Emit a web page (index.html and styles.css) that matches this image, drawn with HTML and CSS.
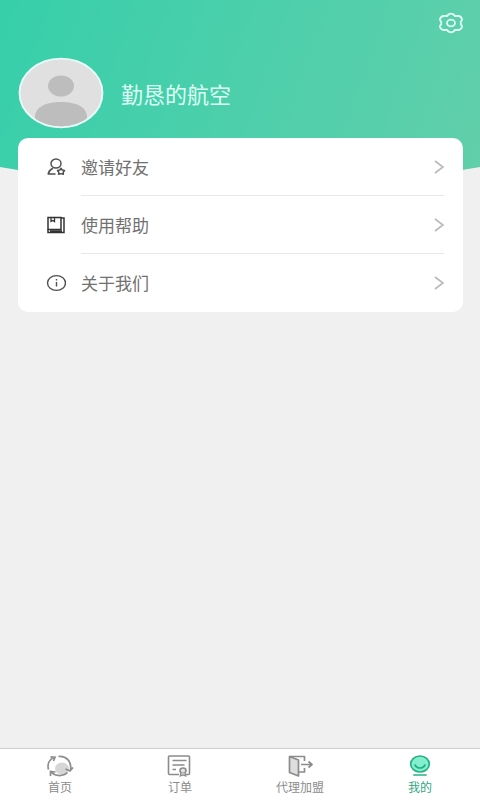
FILE: index.html
```html
<!DOCTYPE html>
<html lang="zh-CN">
<head>
<meta charset="utf-8">
<meta name="viewport" content="width=device-width, initial-scale=1">
<title>我的</title>
<link rel="stylesheet" href="styles.css">
</head>
<body>
<main class="page">
  <header class="profile">
    <button class="settings" type="button" aria-label="设置">
      <svg width="26" height="22" viewBox="0 0 26 22" fill="none" stroke="#dffff5" stroke-width="1.800" stroke-linejoin="round">
        <path d="M10.500 2.500Q13 .6 15.500 2.500L17 4H20.500Q23 4.200 24 7Q24.300 8.500 22.800 9.500V12.500Q24.300 13.500 24 15Q23 17.800 20.500 18H17L15.500 19.500Q13 21.400 10.500 19.500L9 18H5.500Q3 17.800 2 15Q1.700 13.500 3.200 12.500V9.500Q1.700 8.500 2 7Q3 4.200 5.500 4H9Z"/>
        <ellipse cx="13" cy="11" rx="4" ry="3.300"/>
      </svg>
    </button>
    <div class="user">
      <svg class="avatar" width="86" height="72" viewBox="0 0 86 72" role="img" aria-label="头像">
        <defs><clipPath id="face"><ellipse cx="43" cy="36" rx="41" ry="34"/></clipPath></defs>
        <ellipse cx="43" cy="36" rx="41.500" ry="34.300" fill="#e0e0e0"/>
        <g clip-path="url(#face)" fill="#bdbdbd">
          <ellipse cx="43" cy="29" rx="13" ry="10.500"/>
          <path d="M17 72V60C17 50 28 45 43 45S69 50 69 60V72Z"/>
        </g>
        <ellipse cx="43" cy="36" rx="41.500" ry="34.300" fill="none" stroke="#eafff9" stroke-width="1.800"/>
      </svg>
      <h1 class="name">勤恳的航空</h1>
    </div>
  </header>
  <nav class="menu" aria-label="菜单">
    <a class="item" href="#invite">
      <svg class="icon" width="20" height="18" viewBox="0 0 20 18" fill="none" stroke="#505050" stroke-width="1.500" stroke-linecap="round" stroke-linejoin="round">
        <ellipse cx="10" cy="5.500" rx="5" ry="4.500"/>
        <path d="M6.500 10.500C4 11.800 2.500 13.800 2.200 16H9"/>
        <path d="M15 10.300L16.200 12L18.500 12.500L17.200 14.200L17.400 16.300L15 15.600L12.600 16.300L12.800 14.200L11.500 12.500L13.800 12Z"/>
      </svg>
      <span class="label">邀请好友</span>
      <svg class="arrow" width="10" height="14" viewBox="0 0 10 14" fill="none" stroke="#bababa" stroke-width="1.700"><path d="M1 1L9 7L1 13"/></svg>
    </a>
    <a class="item" href="#help">
      <svg class="icon" width="20" height="18" viewBox="0 0 20 18" fill="none" stroke="#333" stroke-width="1.500">
        <path d="M2 1.500H15V13.500H2Z"/>
        <path d="M5 1.500V5.500L6.800 4.500L8.500 5.500V1.500" stroke-width="1.300"/>
        <path d="M15 2H18V16.500H2V13.500M4 15H16"/>
      </svg>
      <span class="label">使用帮助</span>
      <svg class="arrow" width="10" height="14" viewBox="0 0 10 14" fill="none" stroke="#bababa" stroke-width="1.700"><path d="M1 1L9 7L1 13"/></svg>
    </a>
    <a class="item" href="#about">
      <svg class="icon" width="20" height="18" viewBox="0 0 20 18" fill="none" stroke="#505050" stroke-width="1.400">
        <ellipse cx="10.500" cy="9" rx="9" ry="7.400"/>
        <path d="M10.500 8V12.500M10.500 5V6.500"/>
      </svg>
      <span class="label">关于我们</span>
      <svg class="arrow" width="10" height="14" viewBox="0 0 10 14" fill="none" stroke="#bababa" stroke-width="1.700"><path d="M1 1L9 7L1 13"/></svg>
    </a>
  </nav>
</main>
<nav class="tabs" aria-label="主导航">
  <a class="tab" href="#home">
    <svg width="28" height="24" viewBox="0 0 28 24" fill="none" stroke="#8c8c8c" stroke-width="1.700">
      <ellipse cx="16" cy="14.500" rx="7" ry="6" fill="#d6d6d6" stroke="none"/>
      <path d="M2.500 15.500C1 10 3.500 5.500 8 3.500M4.500 2.800L9 3.200L7.500 7"/>
      <path d="M12.500 2.500C20 1.500 26 7.500 24.500 16M27 13.500L24 17L19.500 15"/>
      <path d="M21.500 18.500C17 22.800 9.500 22.300 5.500 18.500M4.500 22V17.500L9.500 18"/>
    </svg>
    <span>首页</span>
  </a>
  <a class="tab" href="#orders">
    <svg width="28" height="24" viewBox="0 0 28 24" fill="none" stroke="#8c8c8c" stroke-width="1.600">
      <path d="M13 20.500H3.500Q2.500 20.500 2.500 19.500V3Q2.500 2 3.500 2H22.500Q23.500 2 23.500 3V19.500Q23.500 20.500 22.500 20.500H20"/>
      <path d="M6.500 6.500H20.500M6.500 11H18.500M6.500 15.500H10"/>
      <ellipse cx="17" cy="16.500" rx="3" ry="2.500" fill="#e5e5e5"/>
      <path d="M15 18.500L14.300 22L17 21L19.700 22L19 18.500" fill="#d0d0d0" stroke-width="1.300"/>
    </svg>
    <span>订单</span>
  </a>
  <a class="tab" href="#agent">
    <svg width="28" height="24" viewBox="0 0 28 24" fill="none" stroke="#8c8c8c" stroke-width="1.700" stroke-linejoin="round">
      <path d="M3.500 2.500L12.500 6V22L3.500 18.500Z" fill="#dedede"/>
      <path d="M3.500 2.500H18.500V7M18.500 14V18H13"/>
      <path d="M15 10.500H25.500M22.500 7.500L26 10.500L22.500 13.500"/>
    </svg>
    <span>代理加盟</span>
  </a>
  <a class="tab active" href="#me" aria-current="page">
    <svg width="28" height="24" viewBox="0 0 28 24" fill="none" stroke="#24b083" stroke-width="1.700" stroke-linecap="round">
      <ellipse cx="14" cy="10" rx="9.300" ry="8" fill="#83efce"/>
      <path d="M9 11C11 15 17 15 19 11"/>
      <path d="M8 21H20"/>
    </svg>
    <span>我的</span>
  </a>
</nav>
</body>
</html>
```
FILE: styles.css
```css
* {
  box-sizing: border-box;
}

body {
  margin: 0;
  min-height: 100vh;
  display: flex;
  flex-direction: column;
  background: #f0f0f0;
  color: #717171;
  font-family: "Noto Sans CJK SC", sans-serif;
}

a {
  color: inherit;
  text-decoration: none;
}

svg {
  display: block;
  flex: none;
}

.page {
  flex: 1;
}

.profile {
  height: 187px;
  padding: 12px 16px 0 18px;
  background: linear-gradient(110deg, #36cfaa 0%, #4dcfab 50%, #61cfaa 100%);
  clip-path: ellipse(111% 100% at 50% 0);
}

.settings {
  display: block;
  margin-left: auto;
  padding: 0;
  border: 0;
  background: none;
  cursor: pointer;
}

.user {
  display: flex;
  align-items: center;
  gap: 17px;
  margin-top: 23px;
}

.name {
  margin: 0;
  color: #dcfff4;
  font-size: 22px;
  font-weight: 400;
  line-height: 32px;
}

.menu {
  position: relative;
  margin: -49px 17px 0 18px;
  border-radius: 10px;
  background: #fff;
}

.item {
  display: flex;
  align-items: center;
  height: 58px;
  padding: 0 19px 0 28px;
}

.label {
  flex: 1;
  margin-left: 15px;
  font-size: 17px;
  line-height: 24px;
}

.item:not(:last-child) {
  background: linear-gradient(#e8e8e8, #e8e8e8) 63px 100% / calc(100% - 82px) 1px no-repeat;
}

.tabs {
  display: grid;
  grid-template-columns: repeat(4, 1fr);
  height: 52px;
  border-top: 1px solid #cecece;
  background: #fff;
}

.tab {
  display: flex;
  flex-direction: column;
  align-items: center;
  padding-top: 5px;
  color: #8c8c8c;
  font-size: 12px;
  line-height: 18px;
}

.active {
  color: #2ba780;
}
```
